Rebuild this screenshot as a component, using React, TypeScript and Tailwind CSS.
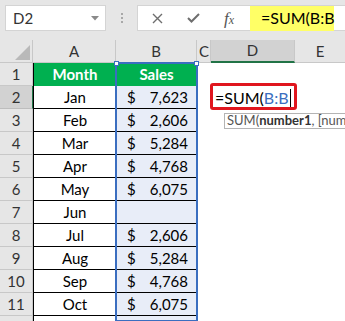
const rows = [
  { m: "Jan", s: "7,623" },
  { m: "Feb", s: "2,606" },
  { m: "Mar", s: "5,284" },
  { m: "Apr", s: "4,768" },
  { m: "May", s: "6,075" },
  { m: "Jun", s: "" },
  { m: "Jul", s: "2,606" },
  { m: "Aug", s: "5,284" },
  { m: "Sep", s: "4,768" },
  { m: "Oct", s: "6,075" },
];

const font = "font-['Lato','Liberation_Sans',sans-serif]";

function RowHead({ n, active }: { n: number | string; active?: boolean }) {
  return (
    <div
      className={`flex items-center justify-center border-b border-r text-[15px] text-[#333] ${
        active ? "bg-[#d2d2d2] border-r-[#217346] border-b-[#bdbdbd]" : "bg-[#e6e6e6] border-[#c8c8c8]"
      }`}
    >
      {n}
    </div>
  );
}

export default function App() {
  return (
    <div className={`w-[345px] h-[321px] overflow-hidden bg-white ${font}`}>
      {/* formula bar */}
      <div className="h-[40px] bg-[#e6e6e6] flex items-start pt-[5px] pl-[5px]">
        <div className="w-[101px] h-[26px] bg-white border border-[#d4d4d4] flex items-center justify-between pl-[7px] pr-[6px]">
          <span className="text-[15px] text-[#333]">D2</span>
          <svg width="8" height="5" viewBox="0 0 8 5">
            <polygon points="0,0 8,0 4,4.5" fill="#8a8a8a" />
          </svg>
        </div>
        <div className="w-[31px] h-[26px] flex flex-col items-center justify-center gap-[2px]">
          <span className="w-[2px] h-[2px] bg-[#a8a8a8]" />
          <span className="w-[2px] h-[2px] bg-[#a8a8a8]" />
          <span className="w-[2px] h-[2px] bg-[#a8a8a8]" />
        </div>
        <div className="flex-1 h-[26px] bg-white border border-[#d4d4d4] border-r-0 flex items-center">
          <div className="w-[38px] flex justify-center">
            <svg width="11" height="11" viewBox="0 0 11 11">
              <path d="M1 1L10 10M10 1L1 10" stroke="#6e6e6e" strokeWidth="1.4" />
            </svg>
          </div>
          <div className="w-[34px] flex justify-center">
            <svg width="13" height="10" viewBox="0 0 13 10">
              <path d="M1 5L4.5 8.5L12 1" stroke="#6e6e6e" strokeWidth="2" fill="none" />
            </svg>
          </div>
          <div className="w-[38px] flex justify-center items-baseline font-['Liberation_Serif',serif] italic text-[17px] leading-none text-[#555]">
            f<span className="text-[12px]">x</span>
          </div>
          <div className="ml-[2px] w-[84px] h-[25px] bg-[#ffff66] flex items-center pl-[11px] text-[16px] text-black">
            =SUM(B:B
          </div>
        </div>
      </div>

      {/* sheet */}
      <div className="relative grid grid-cols-[33px_83px_81px_14px_84px_1fr] auto-rows-[23px]">
        {/* column headers */}
        <div className="bg-[#e6e6e6] border-r border-b border-[#c8c8c8] relative">
          <svg className="absolute left-[15px] top-[5px]" width="15" height="15" viewBox="0 0 15 15">
            <polygon points="15,0 15,15 0,15" fill="#b9b9b9" />
          </svg>
        </div>
        {["A", "B", "C"].map((c) => (
          <div
            key={c}
            className={`bg-[#e6e6e6] border-r border-b border-[#c8c8c8] flex items-center text-[15px] text-[#333] ${
              c === "C" ? "justify-start pl-[2px]" : "justify-center"
            }`}
          >
            {c}
          </div>
        ))}
        <div className="bg-[#d2d2d2] border-r border-[#c8c8c8] border-b-2 border-b-[#217346] flex items-center justify-center text-[15px] text-[#333]">
          D
        </div>
        <div className="bg-[#e6e6e6] border-b border-[#c8c8c8] flex items-center justify-center text-[15px] text-[#333]">
          E
        </div>

        {/* row 1 */}
        <RowHead n={1} />
        <div className="bg-[#00b050] border-l border-black flex items-center justify-center text-white font-bold text-[15px]">
          Month
        </div>
        <div className="bg-[#00b050] flex items-center justify-center text-white font-bold text-[15px]">Sales</div>
        <div />
        <div />
        <div />

        {/* data rows */}
        {rows.map((r, i) => (
          <div key={r.m} className="contents">
            <RowHead n={i + 2} active={i === 0} />
            <div className="border-l border-b border-black flex items-center justify-center text-[15px] text-black">
              {r.m}
            </div>
            <div className="bg-[#e8edf8] border-b border-black flex items-center justify-between pl-[11px] pr-[9px] text-[15px] text-black">
              {r.s && (
                <>
                  <span>$</span>
                  <span>{r.s}</span>
                </>
              )}
            </div>
            <div />
            <div className="relative">
              {i === 0 && (
                <>
                  <div className="absolute left-[-1px] top-[-3px] w-[87px] h-[27px] border-[3px] border-[#e0161e] rounded-[3px]" />
                  <div className="absolute left-[4px] top-[1px] flex items-center h-[21px] text-[16px] text-black whitespace-nowrap">
                    =SUM(<span className="text-[#3a6ec0]">B:B</span>
                    <span className="ml-[1px] w-[1px] h-[18px] bg-black" />
                  </div>
                  <div className="absolute left-[13px] top-[27px] h-[16px] pl-[2px] pr-[6px] bg-white border border-[#b4b4b4] flex items-center text-[13px] text-[#555] whitespace-nowrap z-10">
                    SUM(<b className="text-[#333]">number1</b>, [num
                  </div>
                </>
              )}
            </div>
            <div />
          </div>
        ))}

        {/* row 12 */}
        <RowHead n="" />
        <div className="border-l border-black" />
        <div className="bg-[#e8edf8]" />
        <div />
        <div />
        <div />

        {/* column B selection */}
        <div className="absolute left-[115px] top-[22px] w-[83px] h-[260px] border-2 border-[#3a6ec0] pointer-events-none">
          <span className="absolute -left-[3px] -top-[3px] w-[5px] h-[5px] bg-white border border-[#3a6ec0]" />
          <span className="absolute -right-[3px] -top-[3px] w-[5px] h-[5px] bg-white border border-[#3a6ec0]" />
        </div>
      </div>
    </div>
  );
}
